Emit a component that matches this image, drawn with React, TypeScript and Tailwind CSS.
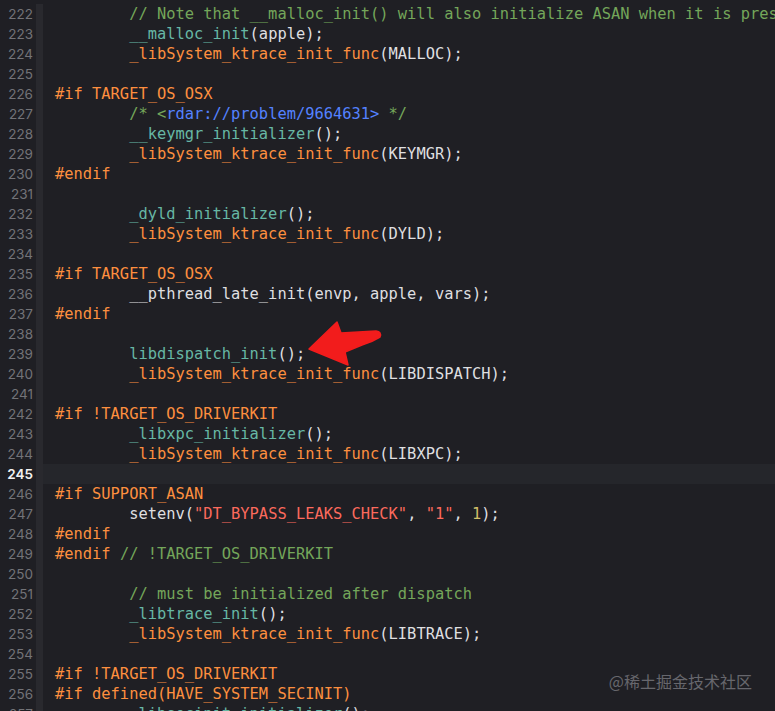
import React from "react";

type Tok = [string, string];

const C = {
  txt: "text-[#dfdfe0]",
  pre: "text-[#fd8f3f]",
  fn: "text-[#67b7a4]",
  com: "text-[#74a65a]",
  url: "text-[#5482ff]",
  str: "text-[#fc6a5d]",
  num: "text-[#d0bf69]",
};

const T = "        ";

const lines: Tok[][] = [
  [[T + "// Note that __malloc_init() will also initialize ASAN when it is present", C.com]],
  [[T + "__malloc_init", C.fn], ["(apple);", C.txt]],
  [[T + "_libSystem_ktrace_init_func", C.pre], ["(MALLOC);", C.txt]],
  [],
  [["#if TARGET_OS_OSX", C.pre]],
  [[T + "/* <", C.com], ["rdar://problem/9664631>", C.url], [" */", C.com]],
  [[T + "__keymgr_initializer", C.fn], ["();", C.txt]],
  [[T + "_libSystem_ktrace_init_func", C.pre], ["(KEYMGR);", C.txt]],
  [["#endif", C.pre]],
  [],
  [[T + "_dyld_initializer", C.fn], ["();", C.txt]],
  [[T + "_libSystem_ktrace_init_func", C.pre], ["(DYLD);", C.txt]],
  [],
  [["#if TARGET_OS_OSX", C.pre]],
  [[T + "__pthread_late_init(envp, apple, vars);", C.txt]],
  [["#endif", C.pre]],
  [],
  [[T + "libdispatch_init", C.fn], ["();", C.txt]],
  [[T + "_libSystem_ktrace_init_func", C.pre], ["(LIBDISPATCH);", C.txt]],
  [],
  [["#if !TARGET_OS_DRIVERKIT", C.pre]],
  [[T + "_libxpc_initializer", C.fn], ["();", C.txt]],
  [[T + "_libSystem_ktrace_init_func", C.pre], ["(LIBXPC);", C.txt]],
  [],
  [["#if SUPPORT_ASAN", C.pre]],
  [
    [T + "setenv(", C.txt],
    ['"DT_BYPASS_LEAKS_CHECK"', C.str],
    [", ", C.txt],
    ['"1"', C.str],
    [", ", C.txt],
    ["1", C.num],
    [");", C.txt],
  ],
  [["#endif", C.pre]],
  [["#endif", C.pre], [" // !TARGET_OS_DRIVERKIT", C.com]],
  [],
  [[T + "// must be initialized after dispatch", C.com]],
  [[T + "_libtrace_init", C.fn], ["();", C.txt]],
  [[T + "_libSystem_ktrace_init_func", C.pre], ["(LIBTRACE);", C.txt]],
  [],
  [["#if !TARGET_OS_DRIVERKIT", C.pre]],
  [["#if defined(HAVE_SYSTEM_SECINIT)", C.pre]],
  [[T + "_libsecinit_initializer", C.fn], ["();", C.txt]],
];

const FIRST = 222;
const CURRENT = 245;

export default function App() {
  return (
    <div className="relative w-[775px] h-[711px] overflow-hidden bg-[#1f1f24]">
      <div className="pt-[4px]">
        {lines.map((toks, i) => {
          const n = FIRST + i;
          const cur = n === CURRENT;
          return (
            <div key={n} className="flex h-[20px] items-center">
              <div
                className={`w-[36px] shrink-0 pr-[3px] text-right text-[13.5px] font-['Inter',sans-serif] ${
                  cur ? "font-semibold text-[#f2f2f2]" : "text-[#737378]"
                }`}
              >
                {n}
              </div>
              <div className="w-[7px] h-full shrink-0 bg-[#29292e]" />
              <div
                className={`flex-1 h-full pl-[12px] whitespace-pre leading-[20px] text-[15.4px] font-['DejaVu_Sans_Mono',monospace] ${
                  cur ? "bg-[#25262b]" : ""
                }`}
              >
                {toks.map(([t, c], j) => (
                  <span key={j} className={c}>
                    {t}
                  </span>
                ))}
              </div>
            </div>
          );
        })}
      </div>

      {/* red annotation arrow */}
      <svg className="absolute left-0 top-0" width="775" height="711" viewBox="0 0 775 711">
        <path
          d="M309 349 L337 322 L341 333 L376 331 Q382 332 380 337 Q372 342 362 345 L345 352 L348 365 Z"
          fill="#f21c1c"
          stroke="#f21c1c"
          strokeWidth="1.5"
          strokeLinejoin="round"
        />
      </svg>

      <div className="absolute right-[23px] top-[669px] text-[16px] text-[#67676d] font-['Noto_Sans_CJK_SC',sans-serif]">
        @稀土掘金技术社区
      </div>
    </div>
  );
}
